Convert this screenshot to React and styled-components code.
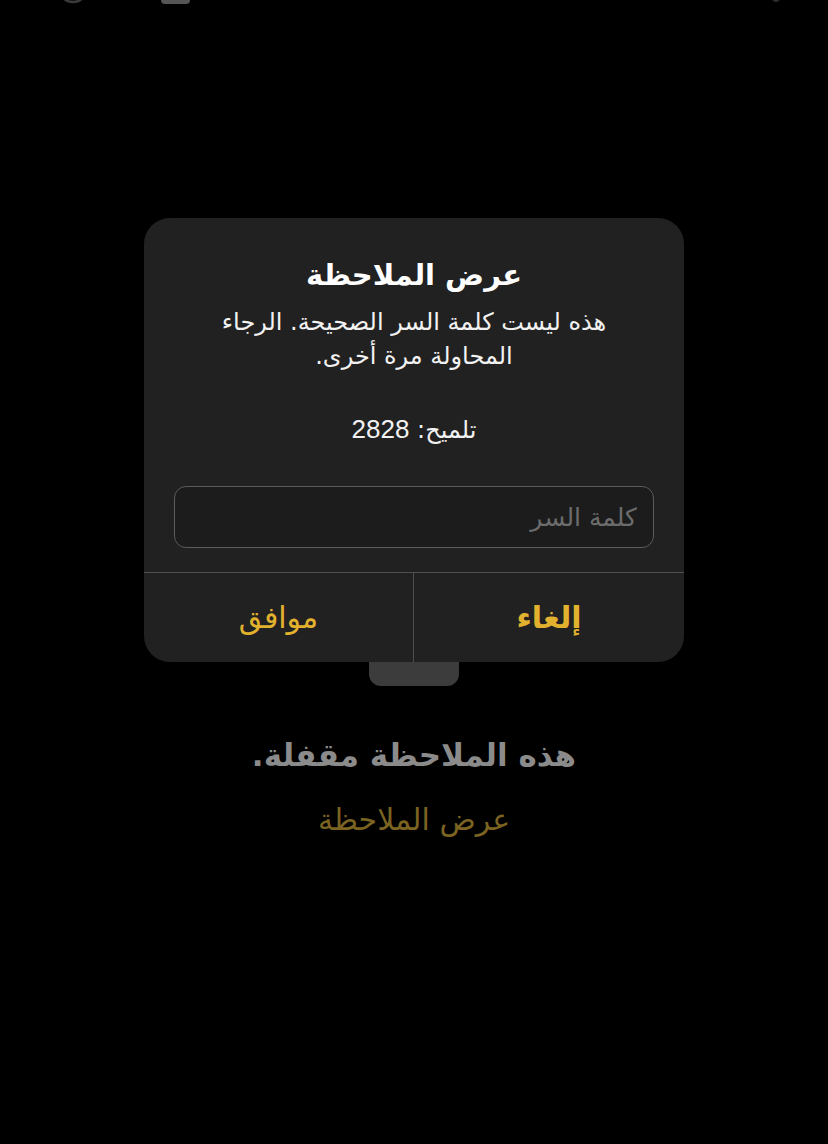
import React from 'react';
import styled, { createGlobalStyle } from 'styled-components'

const Global = createGlobalStyle`
  html, body {
    margin: 0;
    padding: 0;
    background: #000;
  }
  body {
    font-family: "Liberation Sans", "DejaVu Sans", sans-serif;
  }
`

const Screen = styled.div`
  position: relative;
  width: 828px;
  height: 1144px;
  background: #000;
  overflow: hidden;
  display: flex;
  flex-direction: column;
  align-items: center;
`

const TopEdge = styled.svg`
  display: block;
  width: 828px;
  height: 8px;
  flex-shrink: 0;
`

const LockBody = styled.div`
  width: 90px;
  height: 60px;
  margin-top: 618px;
  background: #3c3c3c;
  border-radius: 12px;
`

const LockedText = styled.h2`
  margin: 47px 0 0;
  font-family: "DejaVu Sans", sans-serif;
  font-size: 31px;
  line-height: 44px;
  font-weight: 700;
  color: #8b8b8b;
  direction: rtl;
`

const ShowLink = styled.a`
  margin-top: 24px;
  font-family: "DejaVu Sans", sans-serif;
  font-size: 30px;
  line-height: 38px;
  color: #7b6322;
  direction: rtl;
  cursor: pointer;
`

/* the alert sits over the locked note */
const Alert = styled.div`
  position: absolute;
  top: 218px;
  left: 144px;
  width: 540px;
  height: 444px;
  background: #212121;
  border-radius: 26px;
  display: flex;
  flex-direction: column;
  align-items: center;
  direction: rtl;
  overflow: hidden;
`

const Title = styled.h1`
  margin: 37px 0 0;
  font-family: "DejaVu Sans", sans-serif;
  font-size: 29px;
  line-height: 40px;
  font-weight: 700;
  color: #fff;
`

const Message = styled.p`
  margin: 10px 0 0;
  font-family: "DejaVu Sans", sans-serif;
  font-size: 24px;
  line-height: 34px;
  color: #f2f2f2;
  text-align: center;
`

const Hint = styled.p`
  margin: 39px 0 0;
  font-family: "DejaVu Sans", sans-serif;
  font-size: 24px;
  line-height: 34px;
  color: #f2f2f2;

  span {
    font-family: "Liberation Sans", sans-serif;
    font-size: 26px;
  }
`

const PasswordInput = styled.input`
  box-sizing: border-box;
  margin-top: 39px;
  width: 480px;
  height: 62px;
  padding: 0 16px;
  border: 1px solid #5c5c5c;
  border-radius: 12px;
  background: #1c1c1c;
  color: #fff;
  font-family: "DejaVu Sans", sans-serif;
  font-size: 25px;
  direction: rtl;
  outline: none;

  &::placeholder {
    color: #6c6c6c;
  }
`

const Actions = styled.div`
  margin-top: auto;
  width: 100%;
  height: 89px;
  display: grid;
  grid-template-columns: 1fr 1fr;
  border-top: 1px solid #4f4f4f;
`

const ActionButton = styled.button`
  border: none;
  background: transparent;
  font-family: "DejaVu Sans", sans-serif;
  font-size: 30px;
  font-weight: ${p => (p.$bold ? 700 : 400)};
  color: #e2b22e;
  cursor: pointer;
  padding: 0;

  & + & {
    border-right: 1px solid #4f4f4f;
  }
`

function App() {
  return (
    <Screen>
      <Global />
      <TopEdge viewBox="0 0 828 8">
        <circle cx="73" cy="-12" r="14" fill="none" stroke="#3a3a3a" strokeWidth="2.5" />
        <rect x="161" y="-20" width="29" height="24" rx="4" fill="#555" />
        <circle cx="776" cy="-2" r="4" fill="#2e2e2e" />
      </TopEdge>
      <LockBody />
      <LockedText>هذه الملاحظة مقفلة.</LockedText>
      <ShowLink>عرض الملاحظة</ShowLink>

      <Alert>
        <Title>عرض الملاحظة</Title>
        <Message>
          هذه ليست كلمة السر الصحيحة. الرجاء
          <br />
          المحاولة مرة أخرى.
        </Message>
        <Hint>
          تلميح: <span>2828</span>
        </Hint>
        <PasswordInput type="password" placeholder="كلمة السر" />
        <Actions>
          <ActionButton $bold>إلغاء</ActionButton>
          <ActionButton>موافق</ActionButton>
        </Actions>
      </Alert>
    </Screen>
  )
}

export default App;
